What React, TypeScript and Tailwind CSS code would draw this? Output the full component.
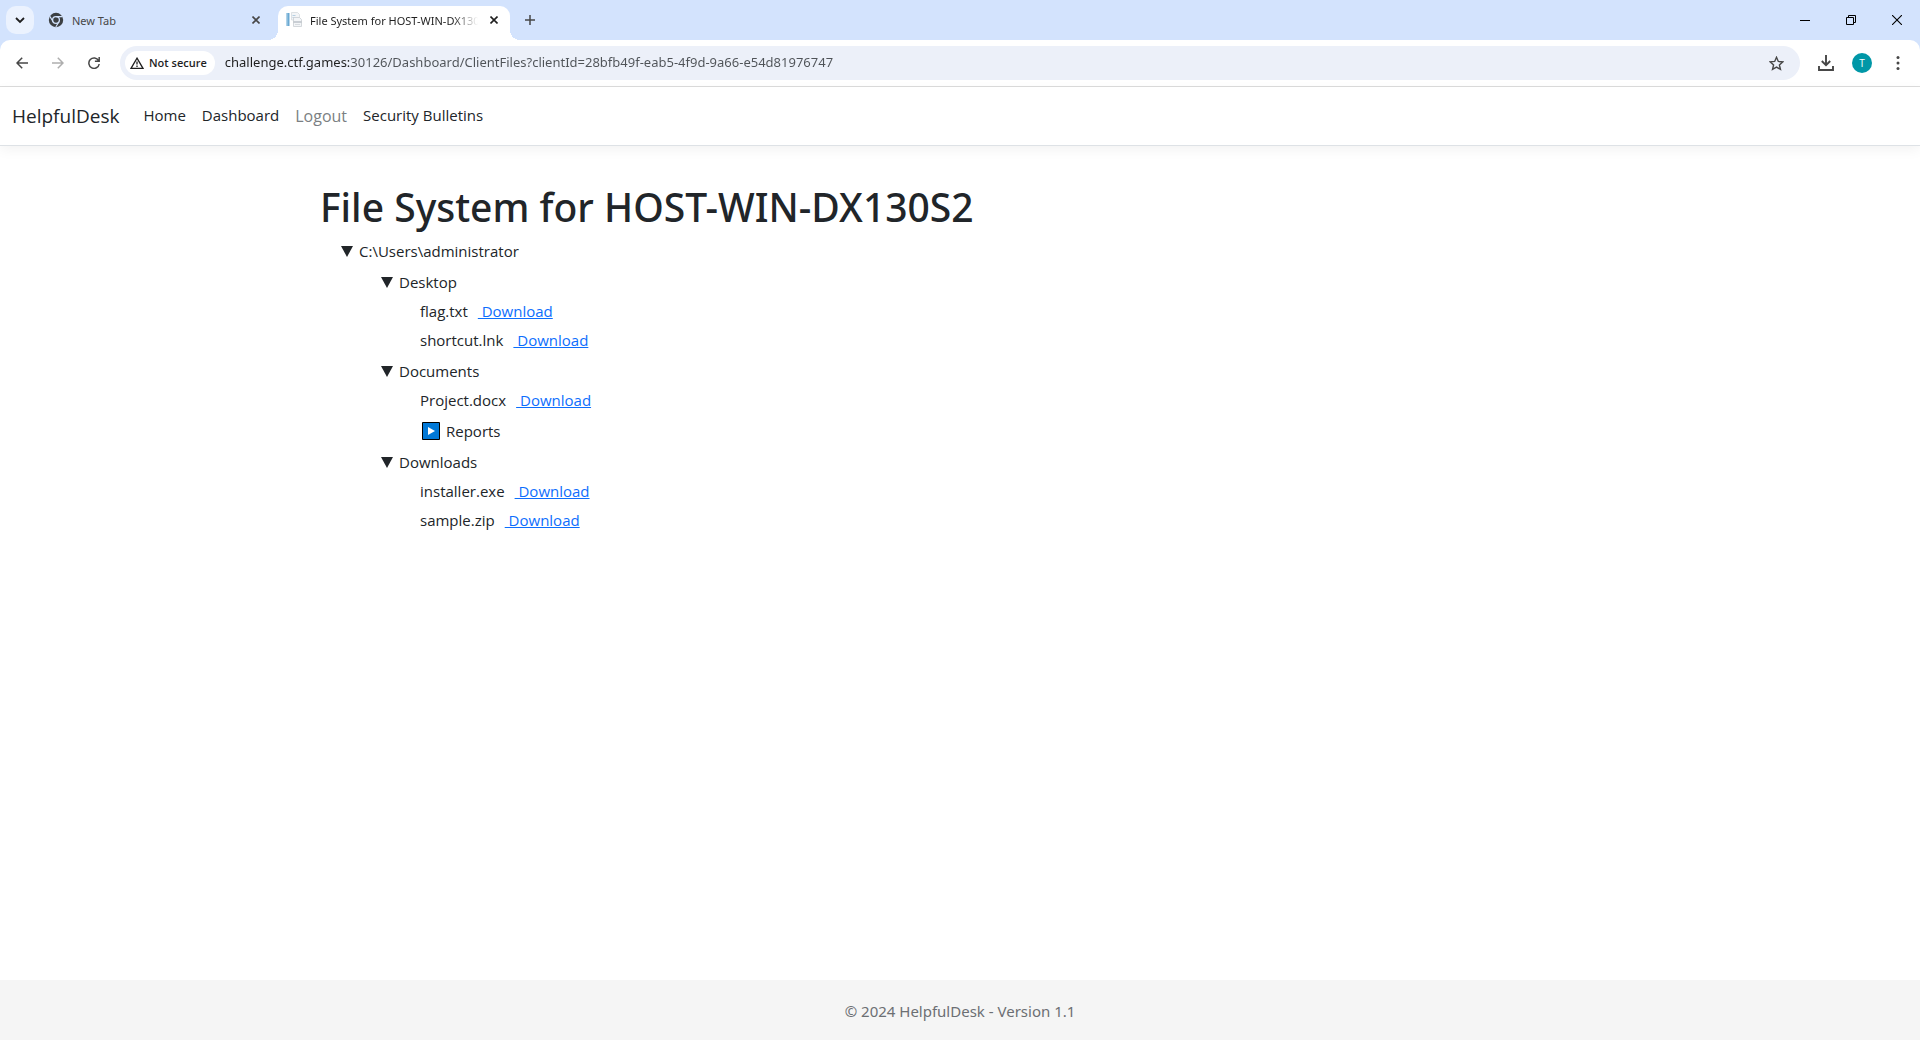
import { useState } from 'react';
import type { ReactNode } from 'react';

type FileEntry = { kind: 'file'; name: string };
type FolderEntry = { kind: 'folder'; name: string; open: boolean; children: Entry[] };
type Entry = FileEntry | FolderEntry;

const root: FolderEntry = {
  kind: 'folder',
  name: 'C:\\Users\\administrator',
  open: true,
  children: [
    {
      kind: 'folder',
      name: 'Desktop',
      open: true,
      children: [
        { kind: 'file', name: 'flag.txt' },
        { kind: 'file', name: 'shortcut.lnk' },
      ],
    },
    {
      kind: 'folder',
      name: 'Documents',
      open: true,
      children: [
        { kind: 'file', name: 'Project.docx' },
        { kind: 'folder', name: 'Reports', open: false, children: [] },
      ],
    },
    {
      kind: 'folder',
      name: 'Downloads',
      open: true,
      children: [
        { kind: 'file', name: 'installer.exe' },
        { kind: 'file', name: 'sample.zip' },
      ],
    },
  ],
};

function ChromeLogo() {
  return (
    <svg viewBox="0 0 16 16" className="size-4 shrink-0" fill="none" aria-hidden="true">
      <circle cx="8" cy="8" r="7.2" fill="#3c4043" />
      <circle cx="8" cy="8" r="3.4" fill="#3c4043" stroke="#d3e3fd" strokeWidth="1.3" />
      <path d="M8 4.6h6.4M5.1 9.8 1.9 4.4M10.9 9.8 7.8 15" stroke="#d3e3fd" strokeWidth="1.1" />
    </svg>
  );
}

function PageFavicon() {
  return (
    <svg viewBox="0 0 16 16" className="size-4 shrink-0" fill="none" aria-hidden="true">
      <path d="M0.5 1h3v13h-3z" fill="#6aa9d2" />
      <path d="M0.5 1h1v13h-1z" fill="#a9cfe8" />
      <path d="M5.5 .5h6l2 2V8h-8z" fill="#f3f5f7" stroke="#d5dade" strokeWidth=".8" />
      <path d="M6.5 3.5h3M6.5 5.5h2" stroke="#b5cfe2" strokeWidth="1" />
      <path d="M7.5 5.5h6l2 2v7h-8z" fill="#f3f5f7" stroke="#c9ced3" strokeWidth=".8" />
      <path d="M7.5 10h8" stroke="#adb5bc" strokeWidth="1.2" />
      <path d="M9 12.5h5" stroke="#d8dce0" strokeWidth="1" />
    </svg>
  );
}

function IconButton({ label, className, children }: { label: string; className?: string; children: ReactNode }) {
  return (
    <button type="button" aria-label={label} className={`flex items-center justify-center shrink-0 ${className ?? ''}`}>
      {children}
    </button>
  );
}

function Cross({ color }: { color: string }) {
  return (
    <svg viewBox="0 0 8 8" className="size-2" fill="none" stroke={color} strokeWidth="1.6" aria-hidden="true">
      <path d="M.5.5l7 7M7.5.5l-7 7" />
    </svg>
  );
}

function TabStrip() {
  return (
    <div className="flex h-10 items-start bg-[#d3e3fd]">
      <IconButton label="Search tabs" className="mt-1.5 ml-1.5 size-7 rounded-[10px] bg-[#ebf2fe]">
        <svg viewBox="0 0 10 10" className="size-2.5" fill="none" stroke="#1f1f1f" strokeWidth="1.8" aria-hidden="true">
          <path d="M1 3l4 4 4-4" />
        </svg>
      </IconButton>
      <div role="tablist" className="flex h-10 items-end">
        <div className="flex h-10 w-[244px] items-center pl-3.5">
          <button type="button" role="tab" aria-selected="false" className="flex min-w-0 flex-1 items-center gap-2 text-left">
            <ChromeLogo />
            <span className="pt-0.5 font-['Noto_Sans',sans-serif] text-[11px] text-[#474747]">New Tab</span>
          </button>
          <IconButton label="Close New Tab" className="mr-[14px] size-4">
            <Cross color="#474747" />
          </IconButton>
        </div>
        <div className="relative flex h-[34px] w-[232px] items-center rounded-t-[10px] bg-white pr-2 pb-1.5 pl-2">
          <span className="absolute bottom-0 -left-2.5 size-2.5 bg-[radial-gradient(circle_at_0_0,transparent_10px,white_10px)]" />
          <span className="absolute -right-2.5 bottom-0 size-2.5 bg-[radial-gradient(circle_at_100%_0,transparent_10px,white_10px)]" />
          <button type="button" role="tab" aria-selected="true" className="flex min-w-0 flex-1 items-center gap-2 text-left">
            <PageFavicon />
            <span className="w-[168px] overflow-hidden pt-0.5 font-['Noto_Sans',sans-serif] text-[11px] whitespace-nowrap text-[#1f1f1f] mask-r-from-85% mask-r-to-100%">
              File System for HOST-WIN-DX130S2
            </span>
          </button>
          <IconButton label="Close File System tab" className="size-4">
            <Cross color="#1f1f1f" />
          </IconButton>
        </div>
      </div>
      <IconButton label="New tab" className="mt-1.5 ml-1.5 size-7">
        <svg viewBox="0 0 10 10" className="size-2.5" fill="none" stroke="#474747" strokeWidth="1.5" aria-hidden="true">
          <path d="M5 0v10M0 5h10" />
        </svg>
      </IconButton>
      <div className="ml-auto flex h-10">
        <IconButton label="Minimize" className="w-[46px]">
          <svg viewBox="0 0 10 10" className="size-2.5" stroke="#000" aria-hidden="true">
            <path d="M0 5.5h10" />
          </svg>
        </IconButton>
        <IconButton label="Restore" className="w-[46px]">
          <svg viewBox="0 0 10 10" className="size-2.5" fill="none" stroke="#000" aria-hidden="true">
            <path d="M.5 2.5h7v7h-7zM2.5 2.5v-2h7v7h-2" />
          </svg>
        </IconButton>
        <IconButton label="Close window" className="w-[46px]">
          <svg viewBox="0 0 10 10" className="size-2.5" fill="none" stroke="#000" strokeWidth="1.1" aria-hidden="true">
            <path d="M0 0l10 10M10 0L0 10" />
          </svg>
        </IconButton>
      </div>
    </div>
  );
}

function Toolbar() {
  return (
    <div className="bg-[#d3e3fd]">
      <div className="flex h-[47px] items-center rounded-t-[10px] border-b border-[#dcdcdc] bg-white">
        <IconButton label="Back" className="ml-2 size-7">
          <svg viewBox="0 0 12 12" className="size-3" fill="none" stroke="#474747" strokeWidth="1.5" aria-hidden="true">
            <path d="M12 6H1M6.2.7L1 6l5.2 5.3" />
          </svg>
        </IconButton>
        <IconButton label="Forward" className="ml-2 size-7">
          <svg viewBox="0 0 12 12" className="size-3" fill="none" stroke="#aeaeae" strokeWidth="1.5" aria-hidden="true">
            <path d="M0 6h11M5.8.7L11 6l-5.2 5.3" />
          </svg>
        </IconButton>
        <IconButton label="Reload" className="ml-2 size-7">
          <svg viewBox="0 0 12 12" className="size-3" fill="none" stroke="#474747" strokeWidth="1.5" aria-hidden="true">
            <path d="M10.6 3.6A5.2 5.2 0 1 0 11.2 7M11.2 0v4.3H6.9" />
          </svg>
        </IconButton>
        <div className="ml-3 flex h-[34px] flex-1 items-center rounded-full bg-[#ecf0f9] pr-3 pl-[5px]">
          <button
            type="button"
            className="flex h-6 items-center gap-[5px] rounded-full bg-white pr-2 pl-[5px] text-[11px] font-semibold text-[#1f1f1f]"
          >
            <svg viewBox="0 0 14 12" className="h-3 w-3.5" fill="none" stroke="#1f1f1f" strokeWidth="1.3" aria-hidden="true">
              <path d="M7 1.2L13 11.3H1z" />
              <path d="M7 4.5v3M7 8.6v1.3" />
            </svg>
            Not secure
          </button>
          <input
            type="text"
            aria-label="Address"
            defaultValue="challenge.ctf.games:30126/Dashboard/ClientFiles?clientId=28bfb49f-eab5-4f9d-9a66-e54d81976747"
            className="ml-2.5 min-w-0 flex-1 bg-[linear-gradient(90deg,#1f1f1f_124px,#4f5358_124px)] bg-clip-text font-['Noto_Sans',sans-serif] text-[13px] text-transparent outline-none"
          />
          <IconButton label="Bookmark this tab" className="size-6">
            <svg viewBox="0 0 14 14" className="size-[15px]" fill="none" stroke="#474747" strokeWidth="1.3" aria-hidden="true">
              <path d="M7 1.2l1.7 3.9 4.2.4-3.2 2.8 1 4.2L7 10.3l-3.7 2.2 1-4.2L1.1 5.5l4.2-.4z" />
            </svg>
          </IconButton>
        </div>
        <IconButton label="Downloads" className="ml-[14px] size-6">
          <svg viewBox="0 0 16 16" className="size-4" fill="none" stroke="#474747" strokeWidth="1.9" aria-hidden="true">
            <path d="M8 0v10M3.8 6L8 10.2 12.2 6M1 11v4h14v-4" />
          </svg>
        </IconButton>
        <IconButton label="Profile" className="ml-3.5 size-5 rounded-full bg-[#0097a7] text-[10px] text-white">
          T
        </IconButton>
        <IconButton label="Menu" className="mr-2 ml-3 size-7">
          <svg viewBox="0 0 4 14" className="h-3.5 w-1" fill="#474747" aria-hidden="true">
            <circle cx="2" cy="1.5" r="1.5" />
            <circle cx="2" cy="7" r="1.5" />
            <circle cx="2" cy="12.5" r="1.5" />
          </svg>
        </IconButton>
      </div>
    </div>
  );
}

function SiteHeader() {
  return (
    <header className="flex h-[59px] items-center border-b border-[#dee2e6] bg-white px-3 text-[15px] text-[#212529] shadow-[0_4px_12px_rgba(0,0,0,0.05)]">
      <a href="#" className="mr-6 text-[19px] leading-[30px]">HelpfulDesk</a>
      <nav className="flex items-center gap-4">
        <a href="#" className="pb-0.5">Home</a>
        <a href="#" className="pb-0.5">Dashboard</a>
        <button type="button" className="text-base text-[#7b7f83]">Logout</button>
        <a href="#" className="pb-0.5">Security Bulletins</a>
      </nav>
    </header>
  );
}

function FileRow({ name }: { name: string }) {
  return (
    <li className="mt-[5px] h-6 leading-6">
      {name}
      <a href="#" className="ml-2.5 whitespace-pre text-[#0d6efd] underline">{' Download'}</a>
    </li>
  );
}

function Folder({ entry }: { entry: FolderEntry }) {
  const [open, setOpen] = useState(entry.open);
  return (
    <li>
      <button
        type="button"
        aria-expanded={open}
        onClick={() => setOpen(!open)}
        className="mt-[5px] flex h-[26px] items-center pt-0.5 leading-6"
      >
        {open ? (
          <svg viewBox="0 0 12 11" className="mr-1.5 ml-px h-[11px] w-3" fill="#212529" aria-hidden="true">
            <path d="M0 0h12L6 11z" />
          </svg>
        ) : (
          <svg viewBox="0 0 18 18" className="mr-1.5 ml-0.5 size-[18px]" aria-hidden="true">
            <path d="M.5.5h17v17H.5z" fill="#0078d7" stroke="#000" />
            <path d="M6 5l7 4-7 4z" fill="#fff" />
          </svg>
        )}
        {entry.name}
      </button>
      {open && (
        <ul className="pl-10">
          {entry.children.map((child) =>
            child.kind === 'folder' ? <Folder key={child.name} entry={child} /> : <FileRow key={child.name} name={child.name} />,
          )}
        </ul>
      )}
    </li>
  );
}

export default function App() {
  return (
    <div className="flex min-h-screen flex-col bg-white font-['Open_Sans','Noto_Sans',sans-serif]">
      <TabStrip />
      <Toolbar />
      <SiteHeader />
      <main className="mx-auto w-full max-w-[1280px] flex-1 pt-[37px] text-[15px] text-[#212529]">
        <h1 className="font-['Noto_Sans',sans-serif] text-[39px] leading-12 font-medium">File System for HOST-WIN-DX130S2</h1>
        <ul className="mt-1.5 pl-5">
          <Folder entry={root} />
        </ul>
      </main>
      <footer className="flex h-[60px] items-center justify-center bg-[#f5f5f5] pt-0.5 font-['Noto_Sans',sans-serif] text-[15px] text-[#6c6f73]">
        © 2024 HelpfulDesk - Version 1.1
      </footer>
    </div>
  );
}
